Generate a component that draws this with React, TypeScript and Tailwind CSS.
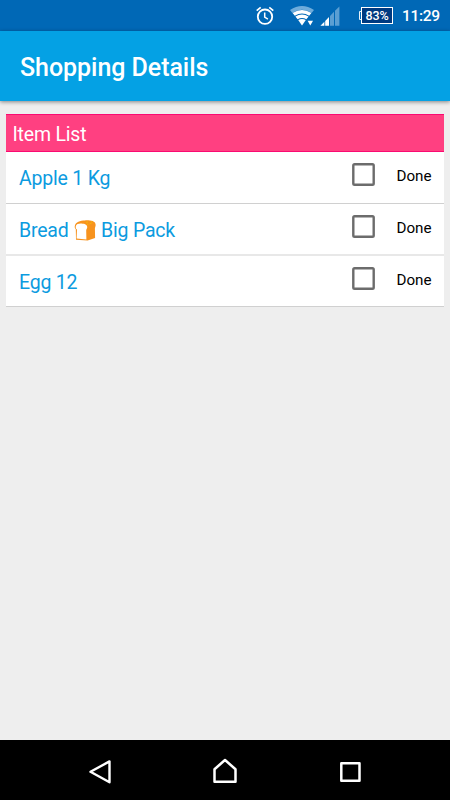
const items = [
  { id: 1, name: 'Apple 1 Kg', row: 'h-[52px] border-b border-[#d0d0d0]' },
  { id: 2, name: 'Bread', suffix: 'Big Pack', row: 'h-[52px] border-b-2 border-[#e8e8e8]' },
  { id: 3, name: 'Egg 12', row: 'h-[51px] border-b border-[#d0d0d0]' },
];

function AlarmIcon() {
  return (
    <svg className="h-[20px] w-[18px]" viewBox="0 0 18 20" fill="none" stroke="#fff">
      <circle cx="9" cy="10.7" r="7.2" strokeWidth="1.8" />
      <path d="M8.7 6.6v4.5l3.2 2" strokeWidth="1.5" />
      <path d="M0.7 4.6L4.7 1.3M17.3 4.6l-4-3.3" strokeWidth="1.7" />
    </svg>
  );
}

function WifiIcon() {
  return (
    <svg className="ml-[16px] h-[21px] w-[25px]" viewBox="0 0 25 21" fill="none">
      <path d="M0 5Q12 -2.8 24 5L21.6 7.9Q12 1.4 2.4 7.9z" fill="#6eacdb" />
      <path d="M2.6 8.1Q12 1.8 21.4 8.1L19.2 10.7Q12 6.3 4.8 10.7z" fill="#fff" />
      <path d="M5.4 11.5Q12 7.6 18.6 11.5L16.4 14.2Q12 11.8 7.6 14.2z" fill="#fff" />
      <path d="M8.2 15.1Q12 12.9 15.8 15.1L12 20.4z" fill="#fff" />
      <path d="M17.6 15.8h5.4l-2.7 4.6z" fill="#fff" />
    </svg>
  );
}

function SignalIcon() {
  return (
    <svg className="ml-[5px] h-[20px] w-[20px]" viewBox="0 0 20 20">
      <path d="M0.4 19.8L4.4 15.8v4zM5.2 14.9l3.8-3.9v8.8H5.2z" fill="#fff" />
      <path d="M10 9.9l4-4.1v14h-4zM15 4.8L19.4 0.5v19.3H15z" fill="#5b9fd3" />
    </svg>
  );
}

function BatteryIcon() {
  return (
    <div className="ml-[19px] flex items-center">
      <div className="-mr-px h-[9px] w-[3px] rounded-l-[1px] border border-r-0 border-white/90" />
      <div className="flex h-[17px] w-[32px] items-center justify-center border border-white bg-[#003a80] pt-px text-[12.5px] leading-none font-medium tracking-[-0.2px]">
        83%
      </div>
    </div>
  );
}

function BreadIcon() {
  return (
    <svg className="mr-[5.5px] ml-[5px] h-[21px] w-[22px]" viewBox="0 0 22 21">
      <path
        d="M1 5.2C1.6 2.2 6.2 0.5 11 0.4c5.6-.2 10.2.6 10.6 4 .2 2-.7 2.8-.7 4.2l.2 9.5-7.5 2.4-11.6-.8L1.8 9.2C.4 8 .6 6.5 1 5.2z"
        fill="#f7931e"
      />
      <path
        d="M1.8 6.2C2.1 3.9 5.1 3.3 7.5 3.5c3.8.2 6 1.5 5.7 4.1-.1 1.2-1 1.6-1 2.8l.2 9-9.8-.8.4-9C1.9 8.8 1.5 7.8 1.8 6.2z"
        fill="#fff"
      />
      <path d="M12 2.4l2-.5M15.5 3.8l2-.5M17 1.8l1.6.3M13 4l1.3.4" stroke="#f6b80a" strokeWidth="1" fill="none" />
    </svg>
  );
}

export default function App() {
  return (
    <div className="flex h-[800px] w-[450px] flex-col overflow-hidden bg-[#eeeeee] font-[Roboto,sans-serif]">
      {/* Status bar */}
      <div className="flex h-[31px] shrink-0 items-center justify-end bg-[#0068b6] pr-[10px] text-white">
        <AlarmIcon />
        <WifiIcon />
        <SignalIcon />
        <BatteryIcon />
        <span className="ml-[9px] w-[38px] pt-[2px] text-[15.5px] leading-none font-medium tracking-[-0.3px] whitespace-nowrap">
          11:29
        </span>
      </div>

      {/* App bar */}
      <header className="z-10 flex h-[70px] shrink-0 items-center bg-[#04a1e4] pt-[3px] pl-[20px] shadow-[0_1px_4px_rgba(0,0,0,0.45)]">
        <h1 className="text-[25px] leading-none font-medium tracking-[-0.05px] text-white">Shopping Details</h1>
      </header>

      {/* Item list */}
      <main className="flex-1 px-[6px] pt-[13px]">
        <section className="w-[438px] bg-white">
          <h2 className="flex h-[38px] items-center border-y border-[#fa0a72] bg-[#ff4081] pt-[3px] pl-[6.5px] text-[19.5px] leading-none tracking-[-0.2px] text-white">
            Item List
          </h2>
          {items.map((item) => (
            <div key={item.id} className={`flex pr-[12.5px] pl-[13px] ${item.row}`}>
              <div className="flex h-[53px] flex-1 items-center text-[19.5px] leading-none tracking-[-0.2px] text-[#0c9be0]">
                {item.name}
                {item.suffix && <BreadIcon />}
                {item.suffix}
              </div>
              <label className="flex h-[45px] items-center text-[15.2px] leading-none text-black">
                <svg className="mr-[21px] h-[23px] w-[23px]" viewBox="0 0 23 23" fill="none">
                  <rect x="1.3" y="1.3" width="20.4" height="20.4" rx="1.3" stroke="#6c6c6c" strokeWidth="2.4" />
                </svg>
                <span className="pt-[5px]">Done</span>
              </label>
            </div>
          ))}
        </section>
      </main>

      {/* Navigation bar */}
      <nav className="flex h-[60px] shrink-0 items-center bg-black pl-[88px]">
        <svg className="mt-[4px] h-[26px] w-[24px]" viewBox="0 0 24 26" fill="none" stroke="#fff" strokeWidth="2.4" strokeLinejoin="round">
          <path d="M21.5 2.4v20.8L2.5 12.8z" />
        </svg>
        <svg className="mt-[2px] ml-[100px] h-[28px] w-[26px]" viewBox="0 0 26 28" fill="none" stroke="#fff" strokeWidth="2.5">
          <path d="M2.5 12.2L13 3l10.5 9.2v12.5h-21z" strokeLinejoin="round" />
        </svg>
        <svg className="mt-[4px] ml-[102px] h-[20px] w-[21px]" viewBox="0 0 21 20" fill="none">
          <rect x="1.3" y="1.3" width="18.2" height="17.4" stroke="#fff" strokeWidth="2.5" strokeLinejoin="round" />
        </svg>
      </nav>
    </div>
  );
}
